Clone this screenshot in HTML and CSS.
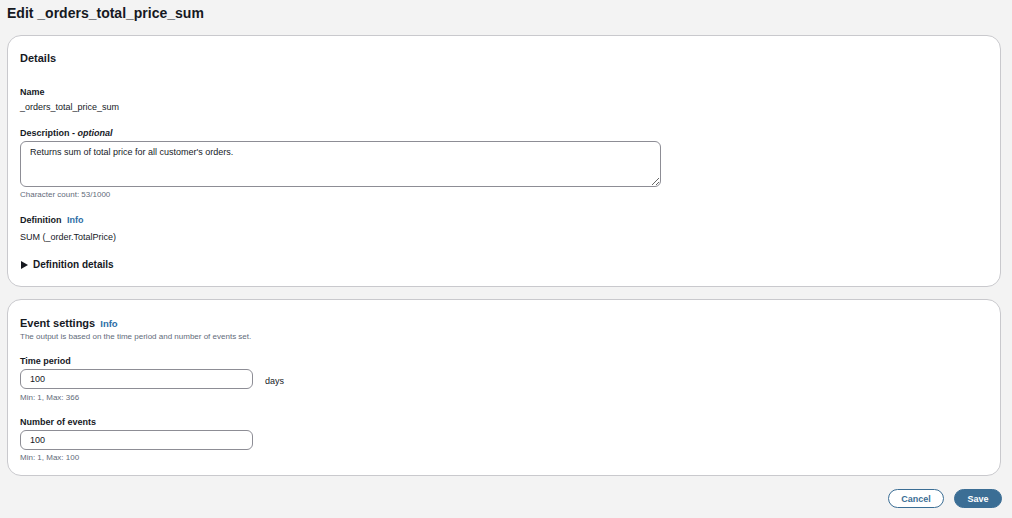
FILE: index.html
```html
<!DOCTYPE html>
<html lang="en">
<head>
<meta charset="utf-8">
<title>Edit _orders_total_price_sum</title>
<link rel="stylesheet" href="styles.css">
</head>
<body>
<div class="page">
  <h1 class="title">Edit _orders_total_price_sum</h1>

  <section class="card card-details">
    <h2 class="card-title">Details</h2>

    <div class="label label-name">Name</div>
    <div class="value value-name">_orders_total_price_sum</div>

    <div class="label label-desc">Description - <em>optional</em></div>
    <textarea class="textarea">Returns sum of total price for all customer's orders.</textarea>
    <div class="hint hint-count">Character count: 53/1000</div>

    <div class="label label-def">Definition <a class="info" href="#">Info</a></div>
    <div class="value value-def">SUM (_order.TotalPrice)</div>

    <div class="expander"><span class="caret"></span>Definition details</div>
  </section>

  <section class="card card-events">
    <h2 class="card-title">Event settings <a class="info info-lg" href="#">Info</a></h2>
    <div class="hint hint-sub">The output is based on the time period and number of events set.</div>

    <div class="label label-time">Time period</div>
    <div class="field-row">
      <input class="input" type="text" value="100">
      <span class="unit">days</span>
    </div>
    <div class="hint hint-min">Min: 1, Max: 366</div>

    <div class="label label-num">Number of events</div>
    <div class="field-row">
      <input class="input" type="text" value="100">
    </div>
    <div class="hint hint-min hint-last">Min: 1, Max: 100</div>
  </section>

  <div class="actions">
    <button class="btn btn-cancel">Cancel</button>
    <button class="btn btn-save">Save</button>
  </div>
</div>
</body>
</html>
```
FILE: styles.css
```css
* { box-sizing: border-box; }

html, body {
  margin: 0;
  padding: 0;
  background: #f3f3f3;
}

body {
  font-family: "Liberation Sans", Arial, sans-serif;
  color: #16191f;
  font-size: 9px;
}

.page {
  padding: 4px 11px 0 7px;
  display: flex;
  flex-direction: column;
}

.title {
  margin: 0;
  font-size: 14px;
  line-height: 18px;
  font-weight: 700;
  color: #16191f;
}

.card {
  background: #ffffff;
  border: 1px solid #c9c9cd;
  border-radius: 14px;
  padding: 15px 12px 14px 12px;
  display: flex;
  flex-direction: column;
  align-items: flex-start;
}

.card-details { margin-top: 13px; }
.card-events { margin-top: 12px; padding-top: 16px; padding-bottom: 12px; }

.card-title {
  margin: 0;
  font-size: 11px;
  line-height: 14px;
  font-weight: 700;
}

.label {
  font-size: 9px;
  line-height: 12px;
  font-weight: 700;
}
.label em { font-style: italic; }

.value {
  font-size: 9px;
  line-height: 12px;
}

.hint {
  font-size: 8px;
  line-height: 11px;
  color: #5f6b7a;
}

.info {
  color: #2b6da6;
  text-decoration: none;
  font-weight: 700;
  margin-left: 3px;
}
.info-lg { font-size: 9.5px; margin-left: 2px; }

.label-name { margin-top: 21px; }
.value-name { margin-top: 3px; }
.label-desc { margin-top: 14px; }

.textarea {
  margin-top: 2px;
  width: 641px;
  height: 46px;
  border: 1px solid #8d8d95;
  border-radius: 6px;
  padding: 4px 9px;
  font-family: inherit;
  font-size: 9px;
  line-height: 12px;
  color: #16191f;
  resize: vertical;
  background: #fff;
}

.hint-count { margin-top: 2px; }
.label-def { margin-top: 14px; }
.value-def { margin-top: 5px; }

.expander {
  margin-top: 15px;
  font-size: 10px;
  line-height: 14px;
  font-weight: 700;
  display: flex;
  align-items: center;
}
.caret {
  width: 0;
  height: 0;
  border-top: 4px solid transparent;
  border-bottom: 4px solid transparent;
  border-left: 7px solid #16191f;
  margin-left: 1px;
  margin-right: 5px;
}

.hint-sub { margin-top: 0; }
.label-time { margin-top: 13px; }
.label-num { margin-top: 13px; }

.field-row {
  margin-top: 2px;
  display: flex;
  align-items: center;
}

.input {
  width: 233px;
  height: 20px;
  border: 1px solid #8d8d95;
  border-radius: 6px;
  padding: 0 9px;
  font-family: inherit;
  font-size: 9px;
  color: #16191f;
  background: #fff;
  outline: none;
}

.unit {
  margin-left: 12px;
  font-size: 9px;
  margin-top: 3px;
}

.hint-min { margin-top: 3px; }
.hint-last { margin-top: 2px; }

.actions {
  margin-top: 13px;
  margin-right: -1px;
  display: flex;
  justify-content: flex-end;
  gap: 10px;
}

.btn {
  height: 19px;
  border-radius: 10px;
  font-family: inherit;
  font-size: 9px;
  font-weight: 700;
  padding: 0;
  cursor: pointer;
}
.btn-cancel {
  width: 56px;
  background: #fff;
  border: 1.5px solid #3b6e95;
  color: #3b6e95;
}
.btn-save {
  width: 48px;
  background: #3b6e95;
  border: 1.5px solid #3b6e95;
  color: #fff;
}
```
